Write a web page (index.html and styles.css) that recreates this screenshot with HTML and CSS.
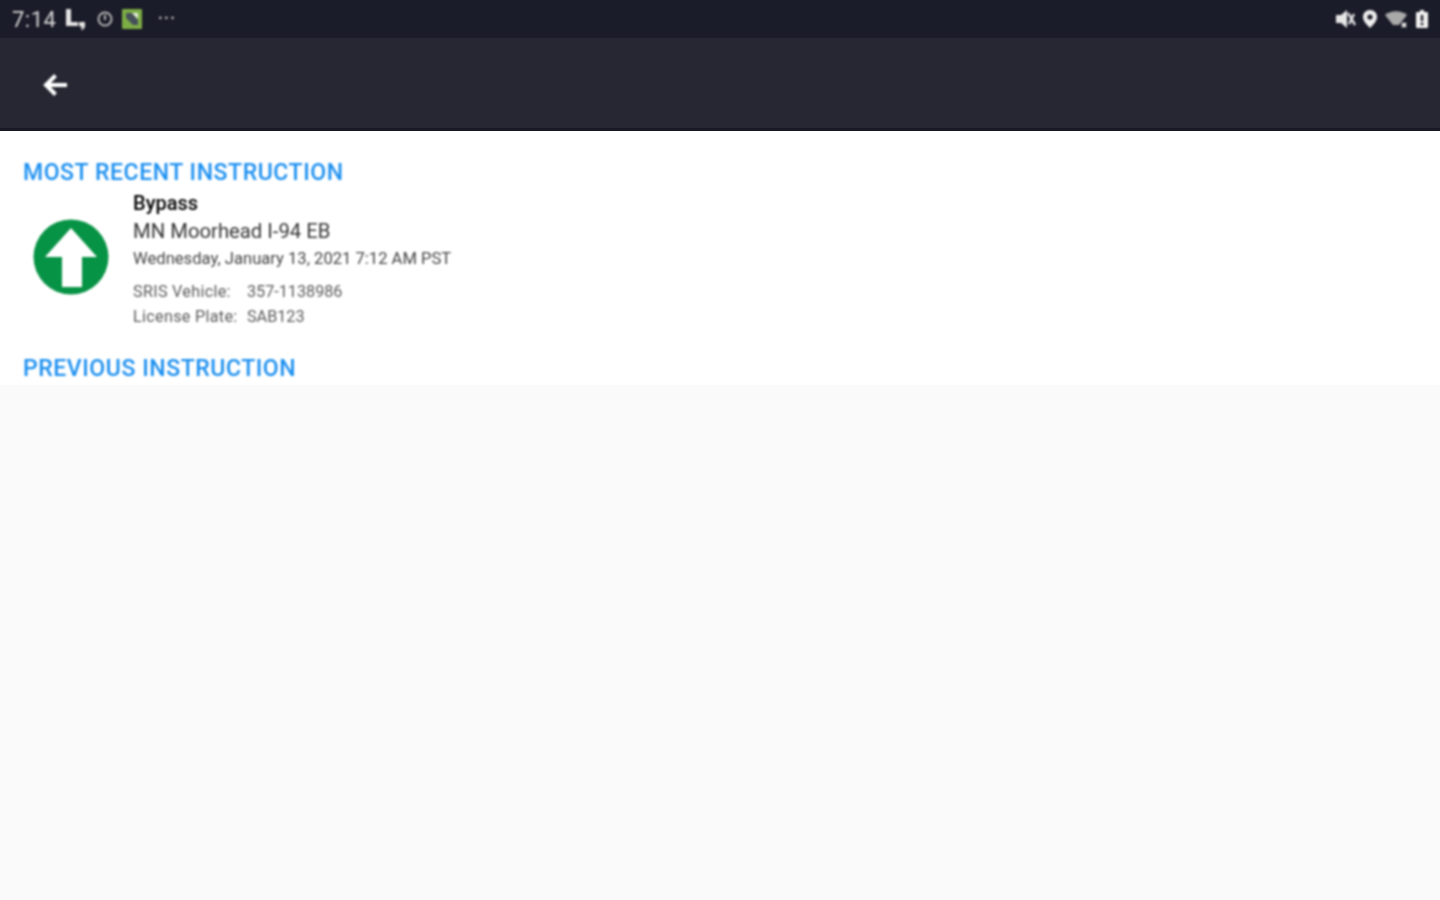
FILE: index.html
```
<!DOCTYPE html>
<html lang="en">
<head>
<meta charset="utf-8">
<title>Instruction</title>
<link rel="stylesheet" href="styles.css">
</head>
<body>
<div class="status">
  <div class="status-group soft">
    <span class="clock">7:14</span>
    <svg class="ic" width="24" height="24" viewBox="0 0 24 24"><path d="M3 2h5v13h7v4H3z M16 15h6v4c0 2-2 4-4 4l1-3c-2 0-3-1-3-2z" fill="#e4e4e4"/></svg>
    <svg class="ic" width="20" height="20" viewBox="0 0 20 20"><circle cx="10" cy="10" r="6.5" fill="none" stroke="#b5b5b5" stroke-width="2"/><path d="M10 6v5" stroke="#b5b5b5" stroke-width="2"/></svg>
    <svg class="ic" width="22" height="22" viewBox="0 0 22 22"><rect x="1" y="1" width="20" height="20" rx="1" fill="#7dae45"/><path d="M5 5h6l6 7v5h-5L5 10z" fill="#46505a"/><path d="M11 5h6v6z" fill="#e8efe0"/></svg>
    <span class="more">···</span>
  </div>
  <div class="status-group right soft">
    <svg width="22" height="20" viewBox="0 0 22 20"><path d="M2 6h5l6-5v18l-6-5H2z" fill="#e6e6e6"/><path d="M14 4l7 12M20 5l-5 10" stroke="#e6e6e6" stroke-width="2.4"/></svg>
    <svg width="18" height="20" viewBox="0 0 18 20"><path d="M9 1c4 0 7 3 7 7 0 4-4 8-7 11-3-3-7-7-7-11 0-4 3-7 7-7z" fill="#efefef"/><circle cx="9" cy="8" r="2.6" fill="#1d1d2b"/></svg>
    <svg width="26" height="20" viewBox="0 0 26 20"><path d="M1 6c6-5 16-5 22 0l-8 10h-6z" fill="#a9a9a9"/><path d="M18 14l4 4M22 14l-4 4" stroke="#efefef" stroke-width="2"/></svg>
    <svg width="14" height="20" viewBox="0 0 14 20"><path d="M5 1h4v2h3a1 1 0 0 1 1 1v14a1 1 0 0 1-1 1H2a1 1 0 0 1-1-1V4a1 1 0 0 1 1-1h3z" fill="#f2f2f2"/><path d="M7 6v6" stroke="#1d1d2b" stroke-width="2.4"/><circle cx="7" cy="15" r="1.4" fill="#1d1d2b"/></svg>
  </div>
</div>
<header class="toolbar">
  <svg class="back soft" width="28" height="28" viewBox="0 0 28 28"><path d="M14.5 4.5L5 14l9.5 9.5M5.5 14H26" fill="none" stroke="#fff" stroke-width="4"/></svg>
</header>
<section class="panel">
  <h2 class="heading soft">MOST RECENT INSTRUCTION</h2>
  <div class="instruction soft">
    <svg class="sign" width="76" height="76" viewBox="0 0 76 76"><circle cx="38" cy="38" r="37.5" fill="#079345"/><path d="M38 9L64 38H49V68H29V38H12z" fill="#fff"/></svg>
    <div class="details">
      <div class="type">Bypass</div>
      <div class="location">MN Moorhead I-94 EB</div>
      <div class="date">Wednesday, January 13, 2021 7:12 AM PST</div>
      <div class="meta meta-first"><span class="label">SRIS Vehicle:</span><span>357-1138986</span></div>
      <div class="meta"><span class="label">License Plate:</span><span>SAB123</span></div>
    </div>
  </div>
  <h2 class="heading heading-prev soft">PREVIOUS INSTRUCTION</h2>
</section>
</body>
</html>
```
FILE: styles.css
```
html, body { margin: 0; padding: 0; height: 100%; }
body {
  width: 1440px;
  height: 900px;
  overflow: hidden;
  background: #fafafa;
  font-family: Roboto, "Liberation Sans", sans-serif;
}
.soft { filter: blur(0.8px); }
.status {
  height: 38px;
  background: #1b1c29;
  display: flex;
  align-items: center;
  justify-content: space-between;
  padding: 0 11px 0 12px;
  color: #d8d8d8;
}
.status-group { display: flex; align-items: center; gap: 7px; }
.status-group.right { gap: 5px; }
.clock { font-size: 22px; color: #d5d5d5; letter-spacing: 0.5px; }
.more { font-size: 22px; margin-left: 7px; line-height: 1; color: #ccc; letter-spacing: 0.4px; }
.ic { display: block; }
.ic:nth-of-type(2) { margin-left: 1px; }
.ic:nth-of-type(3) { margin-left: -1px; }
.toolbar {
  height: 90px;
  background: #272733;
  border-bottom: 3px solid #1a1a27;
  display: flex;
  align-items: center;
  padding-left: 41px;
}
.back { margin-top: 4px; }
.panel {
  background: #fff;
  height: 254px;
  padding: 0 0 0 23px;
  box-sizing: border-box;
  display: flex;
  flex-direction: column;
}
.heading {
  margin: 0;
  font-size: 23px;
  line-height: 28px;
  font-weight: 500;
  color: #1a8ff0;
  letter-spacing: 0.57px;
}
.panel > .heading:first-child { margin-top: 28px; }
.heading-prev { margin-top: 26px; }
.instruction { display: flex; align-items: flex-start; margin-top: 3px; }
.sign { margin: 29px 24px 0 10px; flex: none; }
.details { color: #333; }
.type { font-size: 20px; line-height: 26px; font-weight: 500; color: #000; }
.location { font-size: 20.3px; line-height: 31px; color: #333; }
.date { font-size: 16.6px; line-height: 24px; color: #444; }
.meta { font-size: 16.2px; line-height: 25px; color: #5a5a5a; display: flex; }
.meta-first { margin-top: 8px; }
.label { width: 114px; letter-spacing: 0.3px; }
```
